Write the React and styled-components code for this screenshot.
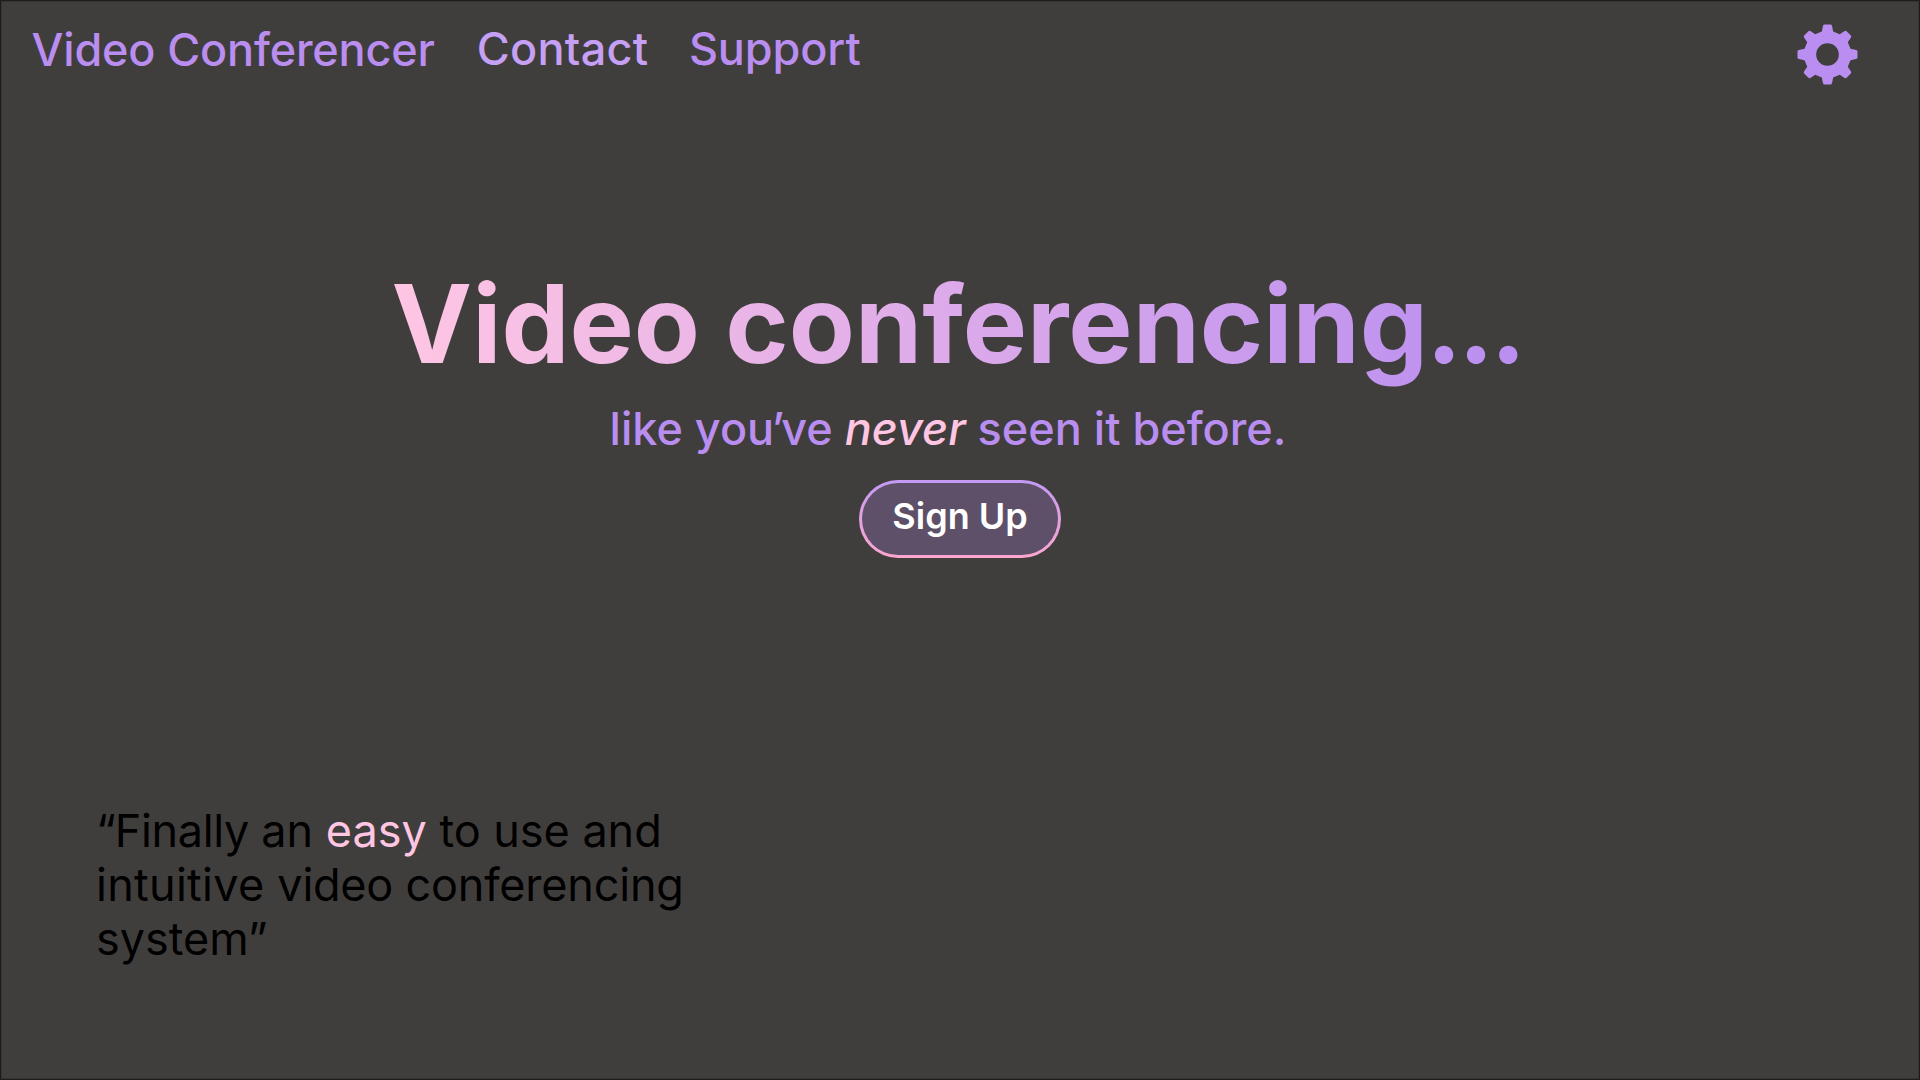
import React from "react";
import styled, { createGlobalStyle } from "styled-components";

const GlobalStyle = createGlobalStyle`
  * { box-sizing: border-box; }
  body { margin: 0; background: #403e3c; }
`;

const Page = styled.main`
  display: flex;
  flex-direction: column;
  width: 1920px;
  height: 1080px;
  overflow: hidden;
  border: 1px solid #1e1d1c;
  box-shadow: inset 0 0 0 1px #363432;
  background: #403e3c;
  font-family: Inter, "Liberation Sans", sans-serif;
  font-size: 45px;
  line-height: 54px;
`;

const Header = styled.header`
  display: flex;
  justify-content: space-between;
  align-items: flex-start;
  height: 258px;
  padding: 21px 61px 0 30.5px;
`;

const Nav = styled.nav`
  display: flex;
  align-items: flex-start;
  font-weight: 500;
`;

const Brand = styled.a`
  margin: 1px 41.8px 0 0;
  color: #b98ef0;
  letter-spacing: -0.16px;
  white-space: nowrap;
`;

const NavLink = styled.a`
  margin-right: 40.5px;
  color: ${(p) => (p.$active ? "#c6a0f5" : "#b98ef0")};
  letter-spacing: ${(p) => (p.$active ? "0.3px" : "-0.1px")};
  white-space: nowrap;
`;

const IconButton = styled.button`
  display: flex;
  margin-top: 2px;
  padding: 0;
  border: 0;
  background: none;
  color: #b98ef0;
`;

const Hero = styled.section`
  display: flex;
  flex-direction: column;
  align-items: center;
`;

const Title = styled.h1`
  margin: 0 6px 0 0;
  font-size: 108px;
  line-height: 130px;
  font-weight: 700;
  letter-spacing: -0.06px;
  color: transparent;
  background: linear-gradient(90deg, #ffc6e3, #b98ef0);
  background-clip: text;
  -webkit-background-clip: text;
  white-space: nowrap;
`;

const Ellipsis = styled.span`
  margin-left: -2px;
  letter-spacing: -3.9px;
`;

const Tagline = styled.p`
  margin: 13px 24px 0 0;
  font-weight: 500;
  color: #b98ef0;
  white-space: nowrap;
`;

const Accent = styled.em`
  color: #ffc6e3;
  font-style: ${(p) => (p.$italic ? "italic" : "normal")};
`;

const Tracked = styled.span`
  letter-spacing: ${(p) => p.$by}px;
`;

const SignUp = styled.button`
  width: 202px;
  height: 78px;
  margin-top: 24px;
  padding: 0 0 7px;
  border: 3px solid transparent;
  border-radius: 39px;
  background:
    linear-gradient(#5e5068, #5e5068) padding-box,
    linear-gradient(#c29af5, #ffa6cf) border-box;
  color: #fff;
  font: 600 36px/44px Inter, "Liberation Sans", sans-serif;
`;

const Quote = styled.blockquote`
  width: 640px;
  margin: 246px 0 0 95px;
  color: #000;
`;

const polar = (x, r, turn) => {
  const a = (turn * Math.PI) / 4;
  const px = x * Math.cos(a) + r * Math.sin(a);
  const py = x * Math.sin(a) - r * Math.cos(a);
  return `${px.toFixed(2)} ${py.toFixed(2)}`;
};

const gearPath =
  Array.from({ length: 8 }, (_, i) => {
    const p = (x, r) => polar(x, r, i);
    return `${i ? "L" : "M"}${p(-17, 69)} L${p(-13.5, 86)} Q${p(-12.5, 90)} ${p(-9, 90)} L${p(9, 90)} Q${p(12.5, 90)} ${p(13.5, 86)} L${p(17, 69)}`;
  }).join(" ") + " Z M34 0 A34 34 0 1 0 -34 0 A34 34 0 1 0 34 0 Z";

const Gear = () => (
  <svg width="61" height="61" viewBox="-91.5 -91.5 183 183" aria-hidden="true">
    <path d={gearPath} fill="currentColor" fillRule="evenodd" />
  </svg>
);

export default function App() {
  return (
    <Page>
      <GlobalStyle />
      <Header>
        <Nav>
          <Brand>Video Conferencer</Brand>
          <NavLink $active>Contact</NavLink>
          <NavLink>Support</NavLink>
        </Nav>
        <IconButton aria-label="Settings">
          <Gear />
        </IconButton>
      </Header>
      <Hero>
        <Title>
          Video conferencing<Ellipsis>...</Ellipsis>
        </Title>
        <Tagline>
          like yo<Tracked $by={-3}>u’</Tracked>ve <Accent $italic>never</Accent> seen it before.
        </Tagline>
        <SignUp>Sign Up</SignUp>
      </Hero>
      <Quote>
        <Tracked $by={-1}>“</Tracked>
        <Tracked $by={-0.35}>Finally </Tracked>an <Accent>easy</Accent>{" "}
        <Tracked $by={-0.04}>to use and </Tracked>
        <Tracked $by={0.27}>intuitive </Tracked>
        <Tracked $by={-0.25}>video </Tracked>
        <Tracked $by={-0.2}>conferencing </Tracked>
        system”
      </Quote>
    </Page>
  );
}
